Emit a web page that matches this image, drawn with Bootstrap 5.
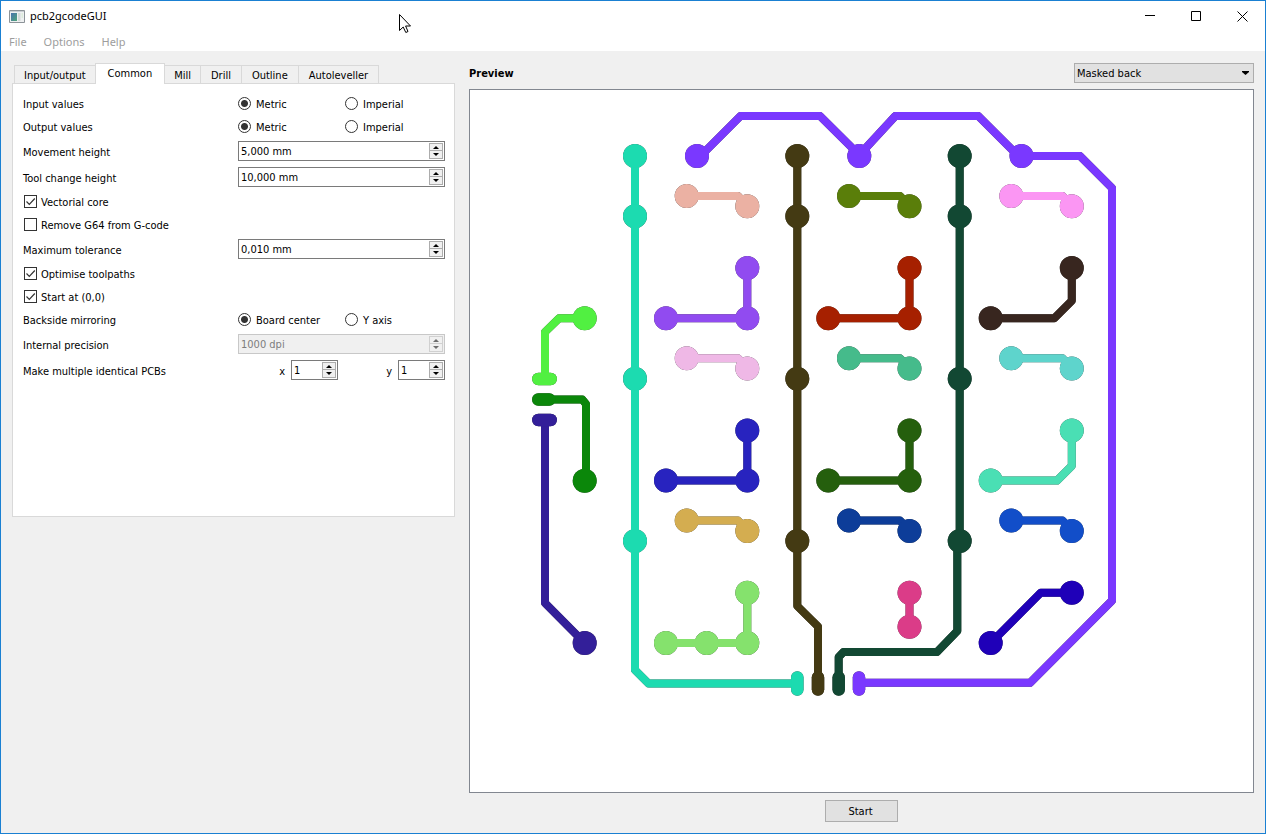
<!DOCTYPE html>
<html lang="en">
<head>
<meta charset="utf-8">
<meta name="viewport" content="width=device-width, initial-scale=1">
<title>pcb2gcodeGUI</title>
<link href="https://cdn.jsdelivr.net/npm/bootstrap@5.3.0/dist/css/bootstrap.min.css" rel="stylesheet">
<style>
  :root { --frame: #1a80d2; --face: #f0f0f0; --edge: #d9d9d9; --field: #7a7a7a; }
  body { font: 11px/16px "DejaVu Sans Condensed", "DejaVu Sans", sans-serif; color: #000; background: var(--face); }
  .app-window { min-height: 100vh; border: 1px solid var(--frame); }
  .caption-font { font-family: "Noto Sans", sans-serif; }

  .title-bar { height: 30px; padding-left: 8px; }
  .title-text { margin-left: 5px; line-height: 16px; }
  .window-btn { width: 46px; height: 29px; padding: 0; border: 0; background: none; display: grid; place-items: center; }
  .menu-bar { height: 20px; padding-left: 8px; gap: 17px; }
  .menu-bar a { color: #9d9d9d; text-decoration: none; line-height: 22px; }

  .workspace { display: grid; grid-template-columns: minmax(443px, 36fr) minmax(0, 64fr); column-gap: 14px; padding: 12px 11px 11px; }

  .nav-tabs { height: 20px; padding-left: 2px; border: 0; align-items: flex-end; flex-wrap: nowrap; position: relative; z-index: 1; }
  .nav-tabs .nav-link { height: 18px; padding: 0 9px; margin: 0 -1px 0 0; line-height: 20px; color: #000; background: var(--face); border: 1px solid var(--edge); border-bottom: 0; border-radius: 0; }
  .nav-tabs .nav-item:nth-child(n+4) .nav-link { padding: 0 10px; }
  .nav-tabs .nav-link.active { height: 21px; padding: 0 12px; margin-bottom: -1px; color: #000; background: #fff; border-color: var(--edge); }
  .tab-panel { min-height: 434px; padding: 11px 9px 11px 10px; background: #fff; border: 1px solid var(--edge); }
  .settings { display: grid; gap: 6px; }
  .setting { display: grid; grid-template-columns: 1fr 100px 100px; column-gap: 7px; min-height: 17px; align-items: center; }
  .setting label, .setting span { padding-top: 2px; line-height: 15px; white-space: nowrap; }
  .setting > .spin { grid-column: 2 / 4; }
  .option { display: flex; align-items: center; gap: 5px; }

  .tick { appearance: none; flex: none; width: 13px; height: 13px; margin: -2px 0 0; background: #fff; border: 1px solid #333; }
  input[type=radio].tick { border-radius: 50%; }
  input[type=radio].tick:checked { background: radial-gradient(circle, #333 0 3px, #fff 4px); }
  input[type=checkbox].tick { margin: -2px -1px 0 1px; }
  input[type=checkbox].tick:checked { background: url("data:image/svg+xml,%3Csvg xmlns='http://www.w3.org/2000/svg' viewBox='0 0 11 11'%3E%3Cpath d='M1.5 5.5 4.3 8.3 9.8 2.5' fill='none' stroke='%23333' stroke-width='1.2'/%3E%3C/svg%3E"); }

  .spin { display: flex; height: 20px; padding: 1px; background: #fff; border: 1px solid var(--field); }
  .spin input { flex: 1; min-width: 0; padding: 2px 1px 0; border: 0; background: none; color: #000; font: inherit; outline: 0; }
  .spin-short { width: 47px; }
  .spin-buttons { display: grid; width: 14px; grid-template-rows: 8px 9px; }
  .spin-buttons button { display: grid; place-items: center; padding: 0; background: var(--face); border: 1px solid #acacac; }
  .spin-buttons button + button { margin-top: -1px; height: 9px; }
  .spin-buttons svg { display: block; width: 6px; height: 3px; fill: #000; }
  .spin.is-off { background: var(--face); border-color: #c8c8c8; }
  .spin.is-off input { color: #7d7d7d; }
  .spin.is-off button { border-color: #d0d0d0; }
  .spin.is-off svg { fill: #6d6d6d; }
  .counter { display: flex; align-items: center; justify-content: flex-end; gap: 6px; }

  .preview-label { line-height: 16px; padding-top: 2px; }
  .view-picker { position: relative; width: 180px; }
  .view-picker select { appearance: none; display: block; width: 100%; height: 20px; padding: 1px 20px 0 2px; font: inherit; color: #000; background: #e1e1e1; border: 1px solid #adadad; border-radius: 0; }
  .view-picker svg { position: absolute; right: 5px; top: 8px; width: 7px; height: 4px; pointer-events: none; }
  .board { margin: 6px 0 7px; background: #fff; border: 1px solid #828790; min-height: 0; }
  .board svg { display: block; width: 100%; height: 100%; }
  .start-btn { width: 73px; height: 22px; padding: 1px 2px 0 0; font: inherit; color: #000; background: #e1e1e1; border: 1px solid #adadad; border-radius: 0; }

  .net { fill: none; stroke-width: 8; stroke-linejoin: round; stroke-linecap: round; filter: drop-shadow(0 0 .5px #444); }
  .net .pads { stroke-width: 24; }
  .net .ends { stroke-width: 12.5; }
  .pointer { position: absolute; left: 399px; top: 13px; width: 13px; height: 21px; pointer-events: none; }
</style>
</head>
<body>
<div class="app-window d-flex flex-column">
  <header class="bg-white caption-font">
    <div class="title-bar d-flex align-items-center">
      <svg width="16" height="13" viewBox="0 0 16 13" aria-hidden="true">
        <defs><linearGradient id="pane" x1="0" y1="0" x2="1" y2="1"><stop offset="0" stop-color="#4a73ae"/><stop offset="1" stop-color="#4fa57a"/></linearGradient></defs>
        <path d="M.5.5h15v12H.5z" fill="#eef0f1" stroke="#8c9398"/>
        <path d="M1 1h14v1H1z" fill="#c9ced2"/>
        <path d="M2 3h6v8H2z" fill="url(#pane)"/>
        <path d="M9 3h2.500v8H9z" fill="#d4dad8"/><path d="M12.500 3H14v5h-1.500z" fill="#dcebdc"/>
      </svg>
      <span class="title-text me-auto">pcb2gcodeGUI</span>
      <button class="window-btn" type="button" aria-label="Minimize"><svg width="10" height="10"><path d="M0 4.500h10" stroke="#000"/></svg></button>
      <button class="window-btn" type="button" aria-label="Maximize"><svg width="10" height="10"><path d="M.5.5h9v9h-9z" fill="none" stroke="#000"/></svg></button>
      <button class="window-btn" type="button" aria-label="Close"><svg width="11" height="11"><path d="M.5.5l10 10M10.500.5l-10 10" stroke="#000"/></svg></button>
    </div>
    <nav class="menu-bar d-flex" aria-label="Main menu"><a href="#">File</a><a href="#">Options</a><a href="#">Help</a></nav>
  </header>

  <main class="workspace flex-grow-1">
    <section aria-label="Settings">
      <ul class="nav nav-tabs" role="tablist">
        <li class="nav-item"><button class="nav-link" type="button" role="tab">Input/output</button></li>
        <li class="nav-item"><button class="nav-link active" type="button" role="tab" aria-selected="true">Common</button></li>
        <li class="nav-item"><button class="nav-link" type="button" role="tab">Mill</button></li>
        <li class="nav-item"><button class="nav-link" type="button" role="tab">Drill</button></li>
        <li class="nav-item"><button class="nav-link" type="button" role="tab">Outline</button></li>
        <li class="nav-item"><button class="nav-link" type="button" role="tab">Autoleveller</button></li>
      </ul>
      <form class="tab-panel">
        <div class="settings">
          <div class="setting" role="radiogroup" aria-label="Input values"><span>Input values</span>
            <label class="option"><input class="tick" type="radio" name="input-unit" checked>Metric</label>
            <label class="option"><input class="tick" type="radio" name="input-unit">Imperial</label></div>
          <div class="setting" role="radiogroup" aria-label="Output values"><span>Output values</span>
            <label class="option"><input class="tick" type="radio" name="output-unit" checked>Metric</label>
            <label class="option"><input class="tick" type="radio" name="output-unit">Imperial</label></div>
          <div class="setting"><label for="movement">Movement height</label>
            <div class="spin"><input id="movement" type="text" value="5,000 mm"><div class="spin-buttons"><button type="button" aria-label="Increase"><svg viewBox="0 0 6 3"><path d="M0 3 3 0 6 3z"/></svg></button><button type="button" aria-label="Decrease"><svg viewBox="0 0 6 3"><path d="M0 0 3 3 6 0z"/></svg></button></div></div></div>
          <div class="setting"><label for="toolchange">Tool change height</label>
            <div class="spin"><input id="toolchange" type="text" value="10,000 mm"><div class="spin-buttons"><button type="button" aria-label="Increase"><svg viewBox="0 0 6 3"><path d="M0 3 3 0 6 3z"/></svg></button><button type="button" aria-label="Decrease"><svg viewBox="0 0 6 3"><path d="M0 0 3 3 6 0z"/></svg></button></div></div></div>
          <div class="setting"><label class="option"><input class="tick" type="checkbox" checked>Vectorial core</label></div>
          <div class="setting"><label class="option"><input class="tick" type="checkbox">Remove G64 from G-code</label></div>
          <div class="setting"><label for="tolerance">Maximum tolerance</label>
            <div class="spin"><input id="tolerance" type="text" value="0,010 mm"><div class="spin-buttons"><button type="button" aria-label="Increase"><svg viewBox="0 0 6 3"><path d="M0 3 3 0 6 3z"/></svg></button><button type="button" aria-label="Decrease"><svg viewBox="0 0 6 3"><path d="M0 0 3 3 6 0z"/></svg></button></div></div></div>
          <div class="setting"><label class="option"><input class="tick" type="checkbox" checked>Optimise toolpaths</label></div>
          <div class="setting"><label class="option"><input class="tick" type="checkbox" checked>Start at (0,0)</label></div>
          <div class="setting" role="radiogroup" aria-label="Backside mirroring"><span>Backside mirroring</span>
            <label class="option"><input class="tick" type="radio" name="mirror" checked>Board center</label>
            <label class="option"><input class="tick" type="radio" name="mirror">Y axis</label></div>
          <div class="setting"><label for="precision">Internal precision</label>
            <div class="spin is-off"><input id="precision" type="text" value="1000 dpi" disabled><div class="spin-buttons"><button type="button" disabled aria-label="Increase"><svg viewBox="0 0 6 3"><path d="M0 3 3 0 6 3z"/></svg></button><button type="button" disabled aria-label="Decrease"><svg viewBox="0 0 6 3"><path d="M0 0 3 3 6 0z"/></svg></button></div></div></div>
          <div class="setting"><span>Make multiple identical PCBs</span>
            <div class="counter"><label for="count-x">x</label>
              <div class="spin spin-short"><input id="count-x" type="text" value="1"><div class="spin-buttons"><button type="button" aria-label="Increase"><svg viewBox="0 0 6 3"><path d="M0 3 3 0 6 3z"/></svg></button><button type="button" aria-label="Decrease"><svg viewBox="0 0 6 3"><path d="M0 0 3 3 6 0z"/></svg></button></div></div></div>
            <div class="counter"><label for="count-y">y</label>
              <div class="spin spin-short"><input id="count-y" type="text" value="1"><div class="spin-buttons"><button type="button" aria-label="Increase"><svg viewBox="0 0 6 3"><path d="M0 3 3 0 6 3z"/></svg></button><button type="button" aria-label="Decrease"><svg viewBox="0 0 6 3"><path d="M0 0 3 3 6 0z"/></svg></button></div></div></div></div>
        </div>
      </form>
    </section>

    <section class="d-flex flex-column" aria-label="Preview">
      <div class="d-flex align-items-center justify-content-between">
        <label class="preview-label fw-bold" for="view">Preview</label>
        <div class="view-picker"><select id="view"><option>Masked back</option></select><svg viewBox="0 0 7 4" aria-hidden="true"><path d="M0 0h7v1L3.500 4 0 1z"/></svg></div>
      </div>
      <div class="board flex-grow-1">
        <svg viewBox="470 90 783 702" role="img" aria-label="Masked back copper layer">
          <!-- long rails -->
          <g class="net" stroke="#1cdbb0"><path d="M635 156V670L648.500 683.500H797"/><path class="pads" d="M635 156h0M635 216.300h0M635 378.700h0M635 541h0"/><path class="ends" d="M797.300 677.500v12"/></g>
          <g class="net" stroke="#443a13"><path d="M797.300 156V606L818 626.500V683"/><path class="pads" d="M797.300 156h0M797.300 216.300h0M797.300 378.700h0M797.300 541h0"/><path class="ends" d="M818 677.500v12"/></g>
          <g class="net" stroke="#124833"><path d="M959.700 156V541M957.300 541V631L937 652H843.500L838.700 657V683"/><path class="pads" d="M959.700 156h0M959.700 216.300h0M959.700 378.700h0M959.700 541h0"/><path class="ends" d="M838.700 677.500v12"/></g>
          <g class="net" stroke="#7a38ff"><path d="M700.500 156L740.500 116H820L859.300 155L895.300 116H978.300L1018.300 156H1080L1112 188V600.700L1030 682.800H859"/><path class="pads" d="M697 156h0M859.300 156h0M1021.500 156h0"/><path class="ends" d="M859 677.500v12"/></g>
          <!-- connector side -->
          <g class="net" stroke="#51f041"><path d="M584.700 318.300H559L545 332V379"/><path class="pads" d="M584.700 318.300h0"/><path class="ends" d="M538.300 379h12.400"/></g>
          <g class="net" stroke="#0b870a"><path d="M545 399.500H582.300L586 404V480.700"/><path class="pads" d="M584.700 480.700h0"/><path class="ends" d="M538.300 399.500h11"/></g>
          <g class="net" stroke="#331f99"><path d="M545 420V603L584.700 643"/><path class="pads" d="M584.700 643h0"/><path class="ends" d="M538.300 420h12.400"/></g>
          <!-- short links -->
          <g class="net" stroke="#ebb1a3"><path d="M686.700 196H738L747.300 206"/><path class="pads" d="M686.700 196h0M747.300 206.300h0"/></g>
          <g class="net" stroke="#5a7e0a"><path d="M849 196H900L909.500 206"/><path class="pads" d="M849 196h0M909.500 206.300h0"/></g>
          <g class="net" stroke="#fb96f3"><path d="M1011.300 196H1062.500L1071.800 206"/><path class="pads" d="M1011.300 196h0M1071.800 206.300h0"/></g>
          <g class="net" stroke="#efb8e6"><path d="M686.700 358.300H738L747.300 368"/><path class="pads" d="M686.700 358.300h0M747.300 368.600h0"/></g>
          <g class="net" stroke="#45bb8b"><path d="M849 358.300H900L909.500 368"/><path class="pads" d="M849 358.300h0M909.500 368.600h0"/></g>
          <g class="net" stroke="#5ed4cc"><path d="M1011.300 358.300H1062.500L1071.800 368"/><path class="pads" d="M1011.300 358.300h0M1071.800 368.600h0"/></g>
          <g class="net" stroke="#d4ad50"><path d="M686.700 520.600H738L747.300 530"/><path class="pads" d="M686.700 520.600h0M747.300 531h0"/></g>
          <g class="net" stroke="#0d3d99"><path d="M849 520.600H900L909.500 530"/><path class="pads" d="M849 520.600h0M909.500 531h0"/></g>
          <g class="net" stroke="#124ec9"><path d="M1011.300 520.600H1062.500L1071.800 530"/><path class="pads" d="M1011.300 520.600h0M1071.800 531h0"/></g>
          <!-- corner links -->
          <g class="net" stroke="#914bf0"><path d="M666 318.300H747.300V268"/><path class="pads" d="M666 318.300h0M747.300 318.300h0M747.300 268h0"/></g>
          <g class="net" stroke="#a62000"><path d="M828.300 318.300H909.500V268"/><path class="pads" d="M828.300 318.300h0M909.500 318.300h0M909.500 268h0"/></g>
          <g class="net" stroke="#38261f"><path d="M990.700 318.300H1054.300L1071.800 300.700V268"/><path class="pads" d="M990.700 318.300h0M1071.800 268h0"/></g>
          <g class="net" stroke="#2823bf"><path d="M666 480.600H747.300V430.400"/><path class="pads" d="M666 480.600h0M747.300 480.600h0M747.300 430.400h0"/></g>
          <g class="net" stroke="#255f0d"><path d="M828.300 480.600H909.500V430.400"/><path class="pads" d="M828.300 480.600h0M909.500 480.600h0M909.500 430.400h0"/></g>
          <g class="net" stroke="#4adfb4"><path d="M990.700 480.600H1057L1071.800 465.800V430.400"/><path class="pads" d="M990.700 480.600h0M1071.800 430.400h0"/></g>
          <g class="net" stroke="#85e26d"><path d="M666 643H747.300V592.800"/><path class="pads" d="M666 643h0M706.700 643h0M747.300 643h0M747.300 592.800h0"/></g>
          <g class="net" stroke="#db3c88"><path d="M909.500 592.800V626.800"/><path class="pads" d="M909.500 592.800h0M909.500 626.800h0"/></g>
          <g class="net" stroke="#1f00b8"><path d="M990.700 643L1040.700 592.800H1071.800"/><path class="pads" d="M990.700 643h0M1071.800 592.800h0"/></g>
        </svg>
      </div>
      <button class="start-btn align-self-center" type="button">Start</button>
    </section>
  </main>
</div>
<svg class="pointer" viewBox="0 0 13 21" aria-hidden="true"><path d="M.5 1.500V17.500L4.200 14 6.800 19.500 9 18.500 6.600 13H11.500z" fill="#fff" stroke="#000"/></svg>
<script src="https://cdn.jsdelivr.net/npm/bootstrap@5.3.0/dist/js/bootstrap.bundle.min.js"></script>
</body>
</html>
